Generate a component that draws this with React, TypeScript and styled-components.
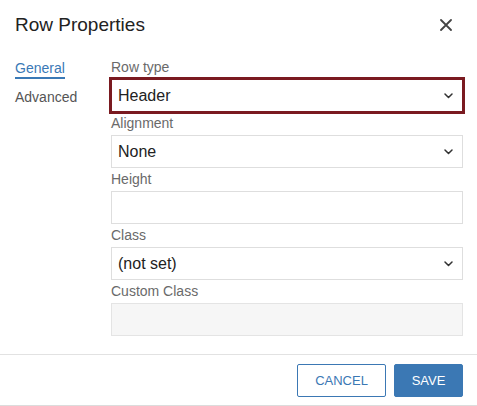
import React from "react";
import styled, { createGlobalStyle } from "styled-components";

const Global = createGlobalStyle`
  html, body { margin: 0; padding: 0; background: #fff; }
  body { font-family: "Liberation Sans", Arial, Helvetica, sans-serif; color: #222; }
  * { box-sizing: border-box; }
`;

const Dialog = styled.div`
  width: 477px;
  height: 406px;
  display: flex;
  flex-direction: column;
  background: #fff;
  border-bottom: 1px solid #dcdcdc;
`;

const Header = styled.div`
  height: 59px;
  padding: 14px 19px 0 15px;
  display: flex;
  align-items: flex-start;
  justify-content: space-between;
`;

const Title = styled.h1`
  margin: 0;
  font-size: 19px;
  line-height: 22px;
  font-weight: 400;
  color: #222;
`;

const CloseButton = styled.button`
  width: 24px;
  height: 24px;
  margin-top: -1px;
  padding: 0;
  border: 0;
  background: transparent;
  display: flex;
  align-items: center;
  justify-content: center;
  cursor: pointer;
`;

const Body = styled.div`
  flex: 1;
  display: grid;
  grid-template-columns: 96px 352px;
  padding: 0 14px 0 15px;
`;

const Nav = styled.nav`
  display: flex;
  flex-direction: column;
  align-items: flex-start;
  gap: 10px;
  padding-top: 1px;
`;

const Tab = styled.div<{ $active?: boolean }>`
  font-size: 14px;
  line-height: 17px;
  color: ${(p) => (p.$active ? "#3a79b6" : "#555")};
  border-bottom: 2px solid ${(p) => (p.$active ? "#3a79b6" : "transparent")};
`;

const Fields = styled.div`
  display: flex;
  flex-direction: column;
  gap: 3px;
`;

const Group = styled.div`
  display: flex;
  flex-direction: column;
  gap: 3px;
`;

const Label = styled.label`
  font-size: 14px;
  line-height: 17px;
  color: #6a6a6a;
`;

const Box = styled.div<{ $focused?: boolean; $disabled?: boolean }>`
  height: 33px;
  display: flex;
  align-items: center;
  justify-content: space-between;
  padding: 0 9px 0 6px;
  font-size: 16px;
  color: #222;
  background: ${(p) => (p.$disabled ? "#f6f6f6" : "#fff")};
  border: 1px solid ${(p) => (p.$focused ? "#7a1a20" : p.$disabled ? "#e4e4e4" : "#dedede")};
  box-shadow: ${(p) => (p.$focused ? "0 0 0 2px #7a1a20" : "none")};
`;

const Footer = styled.div`
  border-top: 1px solid #e2e2e2;
  padding: 9px 14px 8px 0;
  display: flex;
  justify-content: flex-end;
  gap: 8px;
`;

const Button = styled.button<{ $primary?: boolean }>`
  height: 33px;
  width: ${(p) => (p.$primary ? "69px" : "89px")};
  font-family: "Liberation Sans", Arial, sans-serif;
  font-size: 13px;
  border-radius: 2px;
  border: 1px solid #3b78b4;
  background: ${(p) => (p.$primary ? "#3b78b4" : "#fff")};
  color: ${(p) => (p.$primary ? "#fff" : "#3b78b4")};
  cursor: pointer;
`;

const Chevron = () => (
  <svg width="9" height="6" viewBox="0 0 9 6" fill="none">
    <polyline points="1,1 4.5,4.5 8,1" stroke="#333" strokeWidth="1.5" strokeLinecap="round" strokeLinejoin="round" />
  </svg>
);

const CloseIcon = () => (
  <svg width="12" height="12" viewBox="0 0 12 12">
    <path d="M1 1 L11 11 M11 1 L1 11" stroke="#444" strokeWidth="1.8" strokeLinecap="round" />
  </svg>
);

type Field = { label: string; value?: string; select?: boolean; focused?: boolean; disabled?: boolean };

const fields: Field[] = [
  { label: "Row type", value: "Header", select: true, focused: true },
  { label: "Alignment", value: "None", select: true },
  { label: "Height" },
  { label: "Class", value: "(not set)", select: true },
  { label: "Custom Class", disabled: true },
];

export default function App() {
  return (
    <>
      <Global />
      <Dialog>
        <Header>
          <Title>Row Properties</Title>
          <CloseButton aria-label="Close">
            <CloseIcon />
          </CloseButton>
        </Header>
        <Body>
          <Nav>
            <Tab $active>General</Tab>
            <Tab>Advanced</Tab>
          </Nav>
          <Fields>
            {fields.map((f) => (
              <Group key={f.label}>
                <Label>{f.label}</Label>
                <Box $focused={f.focused} $disabled={f.disabled}>
                  <span>{f.value ?? ""}</span>
                  {f.select && <Chevron />}
                </Box>
              </Group>
            ))}
          </Fields>
        </Body>
        <Footer>
          <Button>CANCEL</Button>
          <Button $primary>SAVE</Button>
        </Footer>
      </Dialog>
    </>
  );
}
